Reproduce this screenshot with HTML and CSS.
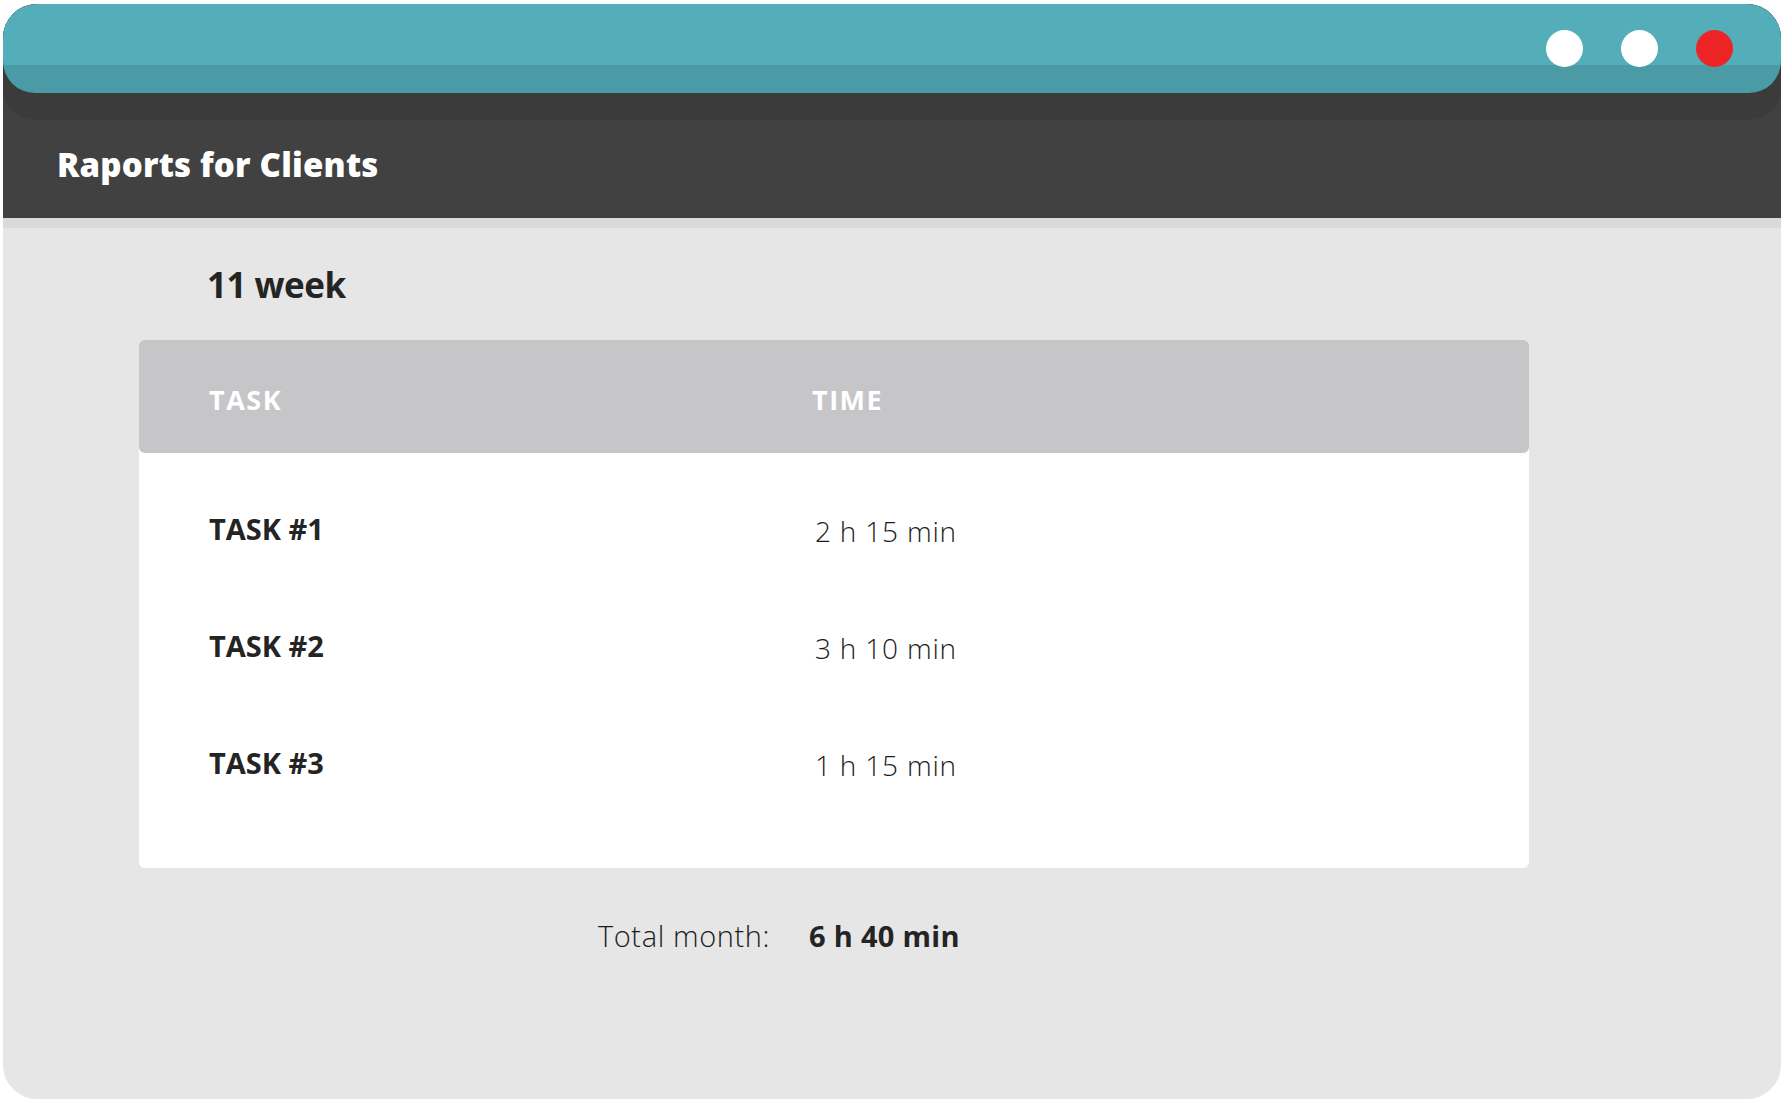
FILE: index.html
```html
<!doctype html>
<html lang="en">

<head>
    <meta charset="utf-8">
    <meta name="viewport" content="width=device-width, initial-scale=1.0">
    <title>Raports for Clients</title>
    <link rel="stylesheet" href="styles.css">
</head>

<body>
    <div class="window">
        <!-- barre de titre + en-tête -->
        <div class="head">
            <div class="bar-shadow">
                <div class="titlebar">
                    <span class="dot"></span>
                    <span class="dot"></span>
                    <span class="dot dot-close"></span>
                </div>
            </div>
            <h1>Raports for Clients</h1>
        </div>

        <div class="content">
            <h2 class="week">11 week</h2>

            <div class="report">
                <div class="report-head">
                    <div>TASK</div>
                    <div>TIME</div>
                </div>
                <div class="report-body">
                    <div class="row">
                        <div class="task">TASK #1</div>
                        <div class="time">2 h 15 min</div>
                    </div>
                    <div class="row">
                        <div class="task">TASK #2</div>
                        <div class="time">3 h 10 min</div>
                    </div>
                    <div class="row">
                        <div class="task">TASK #3</div>
                        <div class="time">1 h 15 min</div>
                    </div>
                </div>
            </div>

            <div class="total">
                <span class="total-label">Total month:</span>
                <span class="total-value">6 h 40 min</span>
            </div>
        </div>
    </div>
</body>

</html>
```

FILE: styles.css
```css
body {
    margin: 0;
    background-color: #fff;
    color: #242424;
    font-family: 'Open Sans', 'DejaVu Sans', sans-serif;
}

.window {
    width: 1778px;
    height: 1095px;
    margin: 4px 0 0 3px;
    border-radius: 34px;
    overflow: hidden;
    background-color: #e6e6e6;
}

/***** en-tête *****/
.head {
    background-color: #414141;
    border-bottom: 10px solid #d9dadc;
}

.bar-shadow {
    background-color: #3b3b3b;
    border-radius: 0 0 32px 32px;
    padding-bottom: 27px;
}

.titlebar {
    height: 89px;
    box-sizing: border-box;
    display: flex;
    justify-content: flex-end;
    align-items: flex-start;
    gap: 38px;
    padding: 26px 48px 0 0;
    border-radius: 0 0 32px 32px;
    background: linear-gradient(to bottom, #53aeb9 61px, #4a9ba5 61px);
}

.dot {
    width: 37px;
    height: 37px;
    border-radius: 50%;
    background-color: #fff;
}

.dot-close {
    background-color: #ec2426;
}

h1 {
    margin: 0;
    height: 98px;
    box-sizing: border-box;
    padding: 0 0 8px 54px;
    color: #fff;
    font-size: 33px;
    font-weight: 800;
    line-height: 90px;
    letter-spacing: 0.2px;
}

/***** contenu *****/
.content {
    padding-left: 136px;
}

.week {
    margin: 37px 0 35px;
    padding-left: 68px;
    font-size: 35px;
    font-weight: bold;
    line-height: 40px;
    letter-spacing: -0.5px;
}

.report {
    width: 1390px;
    background-color: #fff;
    border-radius: 6px;
}

.report-head,
.row {
    display: grid;
    grid-template-columns: 603px 1fr;
    align-items: center;
    padding-left: 70px;
}

.report-head {
    height: 113px;
    box-sizing: border-box;
    padding-top: 6px;
    border-radius: 6px;
    background-color: #c6c6c8;
    color: #fff;
    font-size: 27px;
    font-weight: bold;
    letter-spacing: 1.5px;
}

.report-body {
    padding: 17px 0 47px;
}

.row {
    height: 117px;
    font-size: 29px;
}

.task {
    font-weight: bold;
}

.time {
    padding: 4px 0 0 3px;
    color: #1c1c1c;
    font-size: 28px;
    font-weight: 300;
    letter-spacing: 0.8px;
}

.total {
    display: grid;
    grid-template-columns: 631px auto;
    column-gap: 39px;
    align-items: center;
    margin-top: 48px;
    font-size: 29px;
    line-height: 40px;
}

.total-label {
    text-align: right;
    color: #1c1c1c;
    font-weight: 300;
    letter-spacing: 0.6px;
}

.total-value {
    font-weight: bold;
    letter-spacing: 0.3px;
}
```
